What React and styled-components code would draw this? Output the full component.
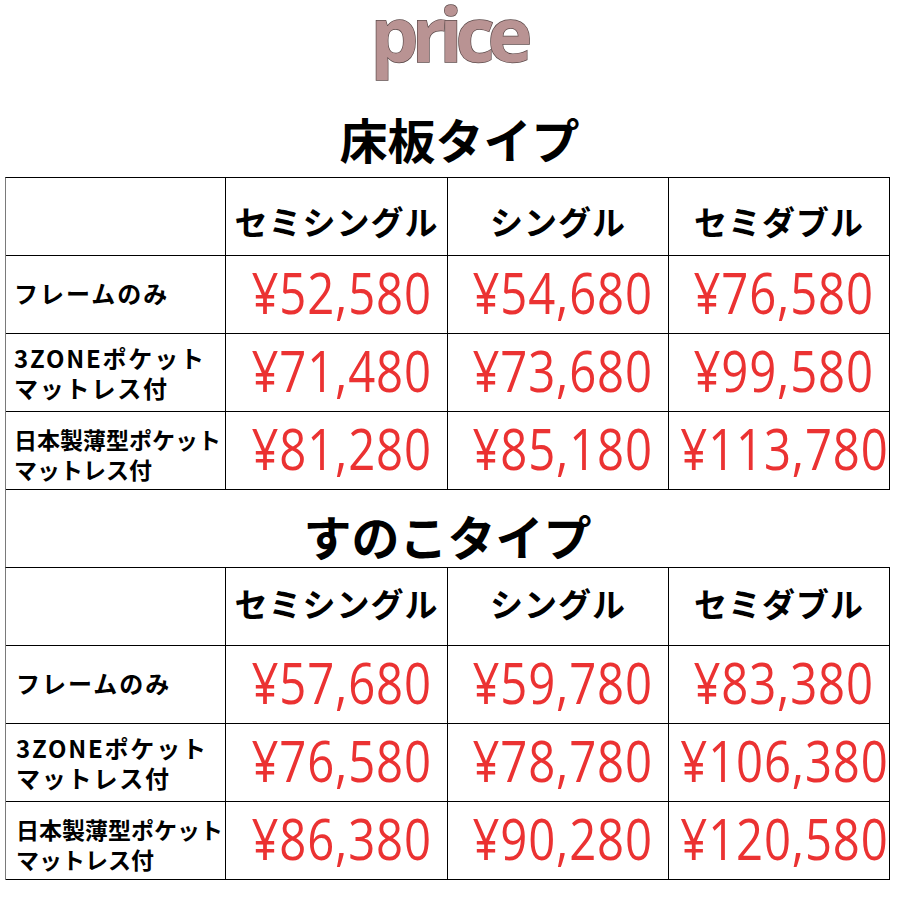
import React from "react";
import styled, { createGlobalStyle } from "styled-components";

const Global = createGlobalStyle`
  html, body { margin: 0; padding: 0; background: #fff; }
  body { font-family: "Noto Sans CJK JP", "Noto Sans", sans-serif; color: #000; }
`;

const shiftPad = (s = 0) =>
  `padding-top: ${Math.max(0, s)}px; padding-bottom: ${Math.max(0, -s)}px;`;

const Page = styled.div`
  width: 900px;
  height: 900px;
  overflow: hidden;
  padding-left: 5px;
  box-sizing: border-box;
`;

const PriceHeading = styled.h1`
  margin: 0;
  height: 99px;
  width: 884px;
  text-align: center;
  font-family: "Open Sans", "Noto Sans", sans-serif;
  font-weight: 700;
  font-size: 76px;
  line-height: 66px;
  letter-spacing: -7px;
  padding-left: 2px;
  box-sizing: border-box;
  color: #b99393;
  -webkit-text-stroke: 1.4px #5e4c4c;
  paint-order: stroke fill;
`;

const SectionTitle = styled.h2`
  margin: 0;
  width: 884px;
  height: ${(p) => p.$h}px;
  box-sizing: border-box;
  display: flex;
  align-items: center;
  justify-content: center;
  ${(p) => shiftPad(p.$pt)}
  padding-left: ${(p) => p.$pl || 0}px;
  border-left: ${(p) => (p.$bordered ? "1px solid #7a7a7a" : "1px solid transparent")};
  font-family: "Noto Sans CJK JP", sans-serif;
  font-weight: 700;
  font-size: 48px;
  line-height: 1;
`;

const Table = styled.div`
  display: grid;
  grid-template-columns: 220px 222px 221px 221px;
  border-left: 1px solid #7a7a7a;
  border-top: 1px solid #000;
  width: max-content;
`;

const Cell = styled.div`
  box-sizing: border-box;
  height: 78px;
  border-right: 1px solid #000;
  border-bottom: 1px solid #000;
  display: flex;
  align-items: center;
`;

const HeadCell = styled(Cell)`
  justify-content: center;
  ${(p) => shiftPad(p.$shift)}
  font-weight: 700;
  font-size: 33px;
  letter-spacing: 1px;
  line-height: 1;
  white-space: nowrap;
`;

const LabelCell = styled(Cell)`
  flex-direction: column;
  align-items: flex-start;
  justify-content: center;
  padding-left: ${(p) => p.$pl}px;
  ${(p) => shiftPad(p.$shift)}
  font-weight: 700;
  font-size: ${(p) => p.$size}px;
  letter-spacing: ${(p) => p.$spacing}px;
  line-height: 30px;
  white-space: nowrap;
`;

const LabelLine = styled.span`
  display: block;
  height: 30px;
`;

const PriceCell = styled(Cell)`
  justify-content: center;
  padding-left: 10px;
  padding-bottom: 4px;
`;

const Price = styled.span`
  display: inline-block;
  flex-shrink: 0;
  font-family: "Open Sans", "Noto Sans", sans-serif;
  font-weight: 400;
  font-size: 57px;
  line-height: 1;
  letter-spacing: 1px;
  color: #eb3232;
  white-space: nowrap;
  transform: scaleX(0.83);
  transform-origin: center;
`;

const sizes = ["セミシングル", "シングル", "セミダブル"];

const labels = [
  { lines: ["フレームのみ"], size: 24, spacing: 2, shift: -3 },
  { lines: ["3ZONEポケット", "マットレス付"], size: 24, spacing: 1.8, shift: 0 },
  { lines: ["日本製薄型ポケット", "マットレス付"], size: 23, spacing: 0, shift: 6 },
];

const sections = [
  {
    title: "床板タイプ",
    titleProps: { $h: 78, $pl: 24 },
    headShift: 10,
    labelPl: 8,
    prices: [
      ["¥52,580", "¥54,680", "¥76,580"],
      ["¥71,480", "¥73,680", "¥99,580"],
      ["¥81,280", "¥85,180", "¥113,780"],
    ],
  },
  {
    title: "すのこタイプ",
    titleProps: { $h: 77, $pt: 12, $bordered: true },
    headShift: -6,
    labelPl: 10,
    prices: [
      ["¥57,680", "¥59,780", "¥83,380"],
      ["¥76,580", "¥78,780", "¥106,380"],
      ["¥86,380", "¥90,280", "¥120,580"],
    ],
  },
];

function PriceTable({ section }) {
  return (
    <>
      <SectionTitle {...section.titleProps}>{section.title}</SectionTitle>
      <Table>
        <HeadCell $shift={0} />
        {sizes.map((s) => (
          <HeadCell key={s} $shift={section.headShift}>
            {s}
          </HeadCell>
        ))}
        {section.prices.map((row, i) => (
          <React.Fragment key={i}>
            <LabelCell
              $pl={section.labelPl}
              $size={labels[i].size}
              $spacing={labels[i].spacing}
              $shift={labels[i].shift}
            >
              {labels[i].lines.map((l) => (
                <LabelLine key={l}>{l}</LabelLine>
              ))}
            </LabelCell>
            {row.map((p, j) => (
              <PriceCell key={j}>
                <Price>{p}</Price>
              </PriceCell>
            ))}
          </React.Fragment>
        ))}
      </Table>
    </>
  );
}

export default function App() {
  return (
    <Page>
      <Global />
      <PriceHeading>price</PriceHeading>
      {sections.map((s) => (
        <PriceTable key={s.title} section={s} />
      ))}
    </Page>
  );
}
